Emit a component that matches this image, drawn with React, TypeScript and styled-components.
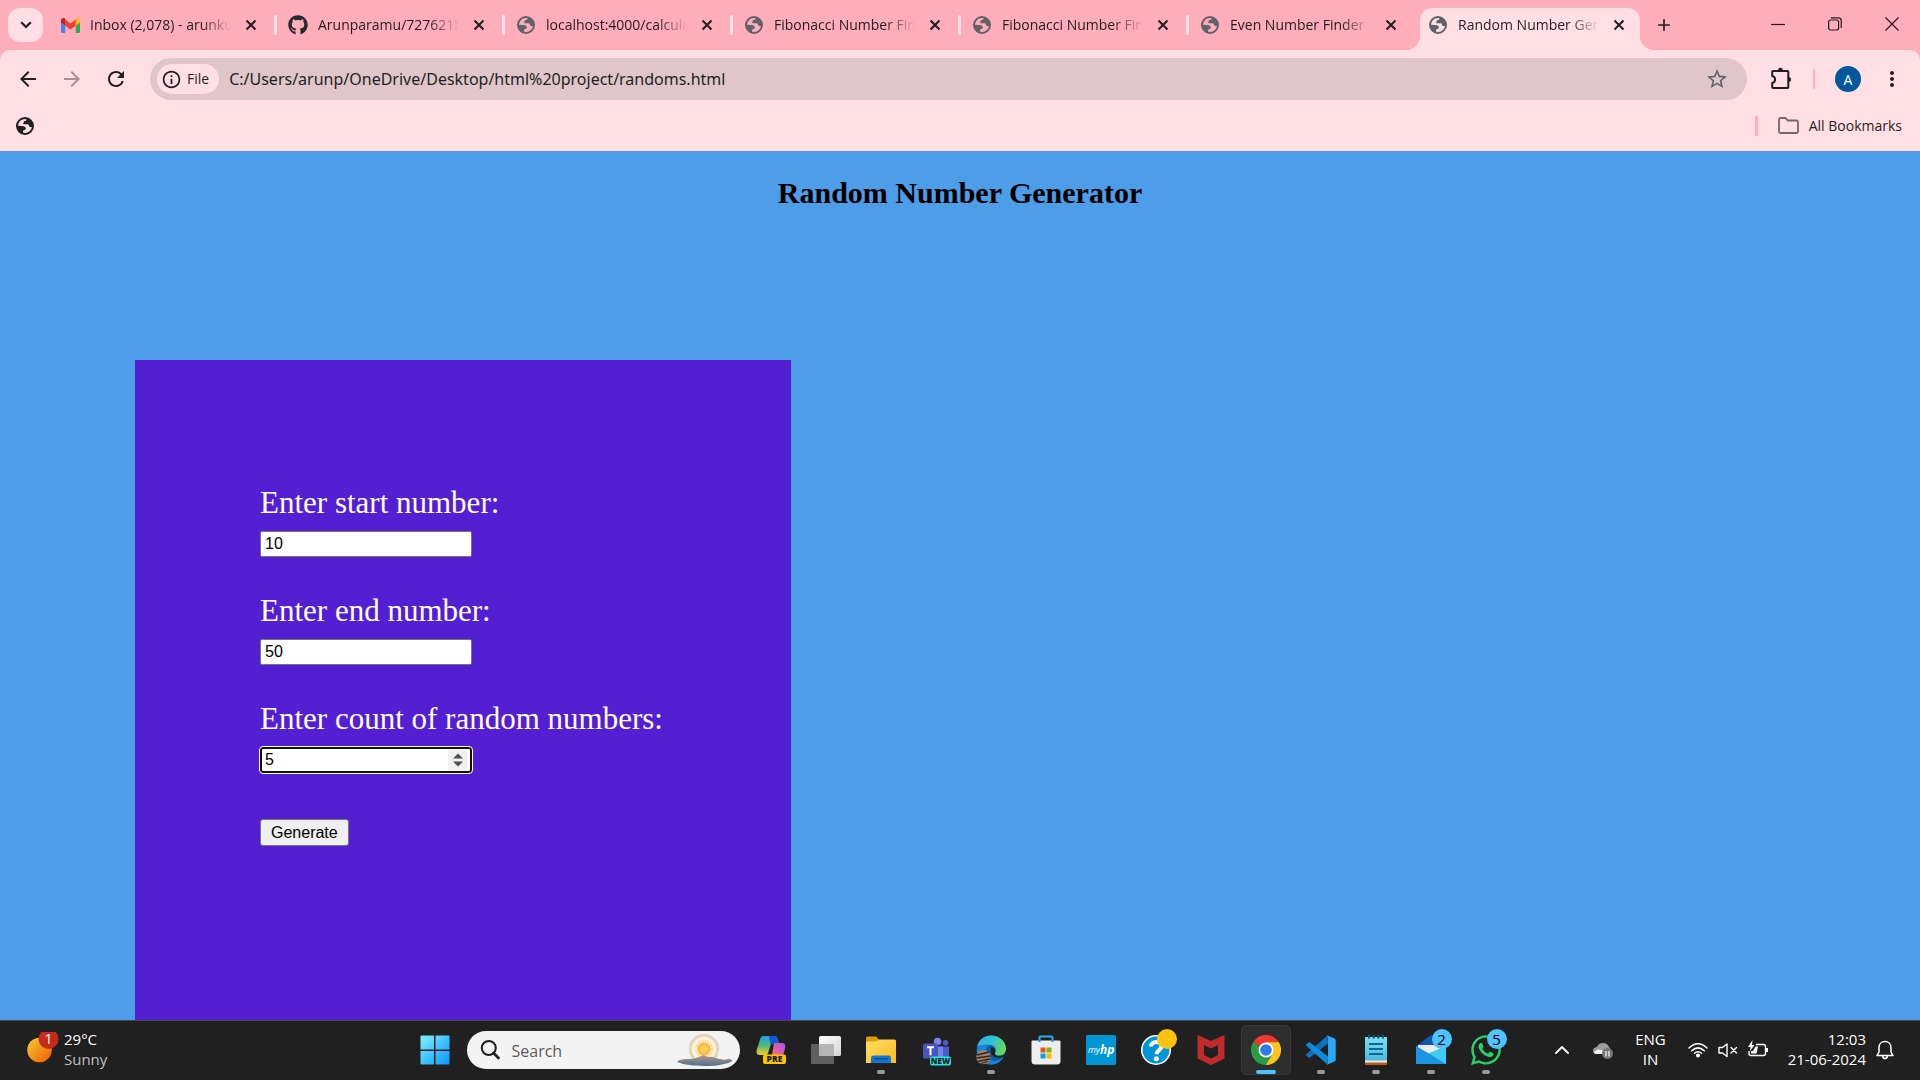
import React, { useState } from "react";
import styled, { createGlobalStyle, css } from "styled-components";
import { FaGithub, FaWhatsapp } from "react-icons/fa6";
import {
  MdArrowBack,
  MdArrowForward,
  MdRefresh,
  MdStarBorder,
  MdMoreVert,
  MdInfoOutline,
  MdAdd,
} from "react-icons/md";

const ui = '"Open Sans", "Noto Sans", sans-serif';
const strip = "#ffacbb";
const bar = "#ffdfe4";

const GlobalStyle = createGlobalStyle`
  * { box-sizing: border-box; }
  body { margin: 0; }
  button { font: inherit; color: inherit; }
  svg { flex: none; }
`;

const Screen = styled.div`
  display: flex;
  flex-direction: column;
  height: 100vh;
  overflow: hidden;
  font-family: ${ui};
  color: #1f1f1f;
`;

const PlainButton = styled.button`
  display: flex;
  align-items: center;
  justify-content: center;
  flex: none;
  padding: 0;
  border: 0;
  background: none;
`;

/* ---------- tab strip ---------- */

const TabStrip = styled.div`
  display: flex;
  align-items: stretch;
  height: 50px;
  padding-left: 8px;
  background: ${strip};
`;

const TabSearch = styled(PlainButton)`
  width: 35px;
  height: 34px;
  margin: 8px 5px 0 0;
  border-radius: 12px;
  background: ${bar};
`;

const TabCell = styled.div<{ $separator?: boolean }>`
  position: relative;
  display: flex;
  flex: 0 1 228px;
  min-width: 0;
  padding: 8px 4px 0;
  ${(p) =>
    p.$separator &&
    css`
      &::after {
        content: "";
        position: absolute;
        right: -1px;
        top: 15px;
        width: 3px;
        height: 20px;
        border-radius: 1px;
        background: ${bar};
      }
    `}
`;

const TabBody = styled.div<{ $active?: boolean }>`
  position: relative;
  display: flex;
  align-items: center;
  flex: 1;
  min-width: 0;
  height: 42px;
  padding: 0 11px 8px 9px;
  border-radius: 12px 12px 0 0;
  background: ${(p) => (p.$active ? bar : "transparent")};
  ${(p) =>
    p.$active &&
    css`
      &::before,
      &::after {
        content: "";
        position: absolute;
        bottom: 0;
        width: 14px;
        height: 14px;
      }
      &::before {
        left: -14px;
        background: radial-gradient(circle at 0 0, transparent 14px, ${bar} 14px);
      }
      &::after {
        right: -14px;
        background: radial-gradient(circle at 100% 0, transparent 14px, ${bar} 14px);
      }
    `}
`;

const Favicon = styled.span`
  display: flex;
  flex: none;
  justify-content: center;
  width: 18px;
  margin-right: 11px;
  color: #5f6368;
`;

const TabTitle = styled.span`
  flex: 1;
  min-width: 0;
  overflow: hidden;
  white-space: nowrap;
  font-size: 14px;
  line-height: 20px;
  mask-image: linear-gradient(to right, #000 calc(100% - 30px), transparent);
`;

const TabClose = styled(PlainButton)`
  width: 20px;
  height: 20px;
  margin-left: 10px;
`;

const NewTab = styled(PlainButton)`
  width: 36px;
  height: 34px;
  margin: 8px 0 0 2px;
  font-size: 20px;
`;

const WindowControls = styled.div`
  display: flex;
  margin-left: auto;
`;

const WindowButton = styled(PlainButton)`
  width: 57px;
  height: 48px;
`;

/* ---------- toolbar ---------- */

const Chrome = styled.div`
  background: ${strip};
`;

const ChromeInner = styled.div`
  background: ${bar};
  border-radius: 10px 10px 0 0;
  padding-top: 8px;
`;

const Toolbar = styled.div`
  display: flex;
  align-items: center;
  gap: 8px;
  padding: 0 10px;
`;

const ToolButton = styled(PlainButton)<{ $muted?: boolean }>`
  width: 36px;
  height: 36px;
  font-size: 24px;
  opacity: ${(p) => (p.$muted ? 0.4 : 1)};
`;

const AddressBar = styled.div`
  display: flex;
  align-items: center;
  flex: 1;
  min-width: 0;
  height: 42px;
  margin: 0 8px;
  padding: 0 18px 0 7px;
  border-radius: 21px;
  background: #e0c6ca;
`;

const FileChip = styled(PlainButton)`
  gap: 5px;
  height: 30px;
  padding: 0 10px 0 4px;
  border-radius: 15px;
  background: ${bar};
  font-size: 14px;
  line-height: 20px;
`;

const Url = styled.input`
  flex: 1;
  min-width: 0;
  margin-left: 10px;
  padding: 0;
  border: 0;
  outline: 0;
  background: none;
  color: #1f1f1f;
  font-family: "Noto Sans", sans-serif;
  font-size: 16px;
  line-height: 24px;
`;

const StarButton = styled(PlainButton)`
  color: #5f6368;
  font-size: 24px;
`;

const Divider = styled.span`
  flex: none;
  width: 2px;
  height: 20px;
  border-radius: 1px;
  background: ${strip};
`;

const Avatar = styled(PlainButton)`
  width: 26px;
  height: 26px;
  margin: 0 5px 0 8px;
  border-radius: 50%;
  background: #01579b;
  color: #fff;
  font-size: 14px;
`;

const ToolEnd = styled.div`
  display: flex;
  align-items: center;
  gap: 8px;
`;

const ExtDivider = styled(Divider)`
  margin: 0 4px 0 6px;
`;

const BookmarkBar = styled.div`
  display: flex;
  align-items: center;
  justify-content: space-between;
  height: 51px;
  padding: 0 18px 0 16px;
`;

const BookmarkItem = styled(PlainButton)`
  gap: 10px;
  font-size: 14px;
  line-height: 20px;
`;

const BookmarkEnd = styled.div`
  display: flex;
  align-items: center;
  gap: 20px;
`;

const BookmarkDivider = styled(Divider)`
  width: 3px;
`;

/* ---------- page ---------- */

const Page = styled.main`
  display: flex;
  flex-direction: column;
  align-items: flex-start;
  flex: 1;
  min-height: 0;
  overflow: hidden;
  background: #4e9de8;
  font-family: "Liberation Serif", serif;
`;

const Title = styled.h1`
  width: 100%;
  margin: 25px 0 150px;
  text-align: center;
  color: #000;
  font-size: 30px;
  line-height: 34px;
`;

const Panel = styled.form`
  display: flex;
  flex-direction: column;
  align-items: flex-start;
  flex: 1 0 auto;
  gap: 36px;
  margin-left: 135px;
  padding: 125px 128px 125px 125px;
  background: #541ed3;
`;

const Field = styled.div`
  display: flex;
  flex-direction: column;
  align-items: flex-start;
  gap: 10px;
`;

const Label = styled.label`
  color: #fff;
  font-size: 31px;
  line-height: 36px;
`;

const NumberInput = styled.input<{ $focused?: boolean }>`
  width: 212px;
  height: 26px;
  padding: 0 4px;
  border: 1px solid #767676;
  border-radius: 2px;
  background: #fff;
  color: #000;
  caret-color: transparent;
  font-family: "Liberation Sans", sans-serif;
  font-size: 16px;
  outline: 0;
  ${(p) =>
    p.$focused &&
    css`
      padding: 0 3px;
      border: 2px solid #101010;
      border-radius: 3px;
      outline: 1px solid #fff;
      &::-webkit-inner-spin-button {
        appearance: none;
        width: 19px;
        height: 20px;
        margin: 0;
        opacity: 1;
        background: #f0f0f0
          url("data:image/svg+xml,%3Csvg xmlns='http://www.w3.org/2000/svg' width='10' height='14' fill='%23505050'%3E%3Cpath d='M0 5.500L5 .5l5 5zM0 8.500h10l-5 5z'/%3E%3C/svg%3E")
          center no-repeat;
      }
    `}
`;

const Generate = styled.button`
  height: 27px;
  margin-top: 10px;
  padding: 0 10px;
  border: 1px solid #767676;
  border-radius: 3px;
  background: #efefef;
  color: #000;
  font-family: "Liberation Sans", sans-serif;
  font-size: 16px;
`;

/* ---------- taskbar ---------- */

const Taskbar = styled.footer`
  display: grid;
  grid-template-columns: 1fr auto 1fr;
  align-items: center;
  height: 60px;
  padding-bottom: 2px;
  border-top: 1px solid #484848;
  background: #202020;
  color: #fff;
  font-size: 15px;
  line-height: 20px;
`;

const Weather = styled(PlainButton)`
  justify-self: start;
  gap: 5px;
  margin-left: 25px;
  text-align: left;
`;

const WeatherText = styled.span`
  display: flex;
  flex-direction: column;
  padding-bottom: 2px;
  & small {
    color: #c0c0c0;
    font-size: 15px;
  }
`;

const Apps = styled.nav`
  display: flex;
  align-items: center;
  gap: 5px;
`;

const AppButton = styled(PlainButton)<{ $active?: boolean }>`
  position: relative;
  width: 50px;
  height: 50px;
  border-radius: 5px;
  border: 1px solid ${(p) => (p.$active ? "#383838" : "transparent")};
  background: ${(p) => (p.$active ? "#2d2d2d" : "none")};
`;

const Running = styled.span<{ $active?: boolean }>`
  position: absolute;
  bottom: 0;
  left: 50%;
  width: ${(p) => (p.$active ? 20 : 8)}px;
  height: 4px;
  border-radius: 2px;
  background: ${(p) => (p.$active ? "#4cc2ff" : "#9a9a9a")};
  transform: translateX(-50%);
`;

const Badge = styled.span`
  position: absolute;
  top: 3px;
  right: 3px;
  width: 20px;
  height: 20px;
  border-radius: 50%;
  background: #4cc2ff;
  color: #000;
  text-align: center;
`;

const SearchBox = styled.label`
  display: flex;
  align-items: center;
  width: 273px;
  height: 38px;
  margin: 0 1px 0 2px;
  padding: 0 7px 0 13px;
  border-radius: 19px;
  background: #f3f3f3;
`;

const SearchInput = styled.input`
  flex: 1;
  min-width: 0;
  margin-left: 12px;
  padding: 2px 0 0;
  border: 0;
  outline: 0;
  background: none;
  font-family: ${ui};
  font-size: 16px;
  &::placeholder {
    color: #5c5c5c;
    opacity: 1;
  }
`;

const Tray = styled.div`
  display: flex;
  align-items: center;
  justify-self: end;
  padding-right: 26px;
`;

const TrayIcons = styled(PlainButton)`
  gap: 10px;
  margin-right: 20px;
`;

const TrayText = styled(PlainButton)`
  flex-direction: column;
  align-items: center;
  margin-right: 22px;
  padding-bottom: 2px;
`;

const Clock = styled(TrayText)`
  align-items: flex-end;
  margin-right: 10px;
`;

const TrayChevron = styled(PlainButton)`
  margin-right: 24px;
`;

const TrayCloud = styled(PlainButton)`
  margin-right: 22px;
`;

/* ---------- drawings ---------- */

const Cross = () => (
  <svg width="12" height="12" viewBox="0 0 12 12" stroke="#1f1f1f" strokeWidth="2">
    <path d="M1.500 1.500l9 9M10.500 1.500l-9 9" />
  </svg>
);

const Chevron = () => (
  <svg width="12" height="8" viewBox="0 0 12 8" fill="none" stroke="#1f1f1f" strokeWidth="2.200">
    <path d="M1.200 1.200L6 6l4.800-4.800" />
  </svg>
);

const Globe = () => (
  <svg width="18" height="18" viewBox="0 0 18 18">
    <circle cx="9" cy="9" r="8" fill="none" stroke="currentColor" strokeWidth="2" />
    <path d="M10.500 1v1.500q0 1.500-1.600 1.500-1.300 0-1.300 1.400 0 1.300-1 1.600 3 .3 5 .3 1.300 0 1.300 1.300 0 1.400 1.300 1.400H17Q17.600 3 10.500 1z" fill="currentColor" />
    <path d="M1 8.700q2.500 0 5.200.2 3.600.3 3.600 2.600 0 1.500-1.500 1.500-1.300.1-1.300 1.500V17Q1 15.500 1 8.700z" fill="currentColor" />
  </svg>
);

const Gmail = () => (
  <svg width="19" height="15" viewBox="0 0 19 15">
    <path d="M0 3v10.700c0 .7.6 1.300 1.300 1.300h3V7.500L2 3z" fill="#4285f4" />
    <path d="M14.700 15h3c.7 0 1.300-.6 1.300-1.300V3l-2 .5-2.300 4z" fill="#34a853" />
    <path d="M14.700 2v5.700L19 4.500V2.500C19 .6 16.600-.6 15 .6z" fill="#fbbc04" />
    <path d="M4.300 7.700V1.600L9.500 5.500l5.200-3.900v6.100L9.500 11.600z" fill="#ea4335" />
    <path d="M0 2.500v2l4.300 3.200V1.600L4 .6C2.400-.6 0 .6 0 2.500z" fill="#c5221f" />
  </svg>
);

const Puzzle = () => (
  <svg width="24" height="26" viewBox="0 0 24 26" fill="none">
    <path d="M4 5h14.500q.8 0 .8.800v15.400q0 .8-.8.800H4q-.8 0-.8-.8V17c3.800-.6 3.800-6.400 0-7V5.800Q3.200 5 4 5z" stroke="#1f1f1f" strokeWidth="2" strokeLinejoin="round" />
    <path d="M9 4.500a2.400 2.700 0 0 1 4.800 0zM19.500 11a2.500 2.500 0 0 1 0 5z" fill="#1f1f1f" />
  </svg>
);

const Folder = () => (
  <svg width="21" height="17" viewBox="0 0 21 17" fill="none" stroke="#6a6a6e" strokeWidth="1.800">
    <path d="M1 2.500C1 1.700 1.700 1 2.500 1h5l2.200 2.500h8.800c.8 0 1.500.7 1.500 1.500v9.500c0 .8-.7 1.500-1.500 1.500h-16c-.8 0-1.500-.7-1.500-1.500z" />
  </svg>
);

const Sun = () => (
  <svg width="34" height="36" viewBox="0 0 34 36">
    <defs>
      <linearGradient id="sun" x1="0" y1="0" x2="1" y2="1">
        <stop offset="0" stopColor="#f5cf35" />
        <stop offset=".7" stopColor="#f47a12" />
        <stop offset="1" stopColor="#ee5f10" />
      </linearGradient>
    </defs>
    <circle cx="14.500" cy="18" r="12.300" fill="url(#sun)" />
    <circle cx="23.500" cy="7" r="10" fill="#c42b1c" />
    <text x="23.500" y="12" textAnchor="middle" fill="#fff" fontFamily="Open Sans" fontSize="14">1</text>
  </svg>
);

const Windows = () => (
  <svg width="30" height="30" viewBox="0 0 30 30">
    <defs>
      <linearGradient id="win" gradientUnits="userSpaceOnUse" x1="0" y1="0" x2="30" y2="30">
        <stop offset="0" stopColor="#7df3ff" />
        <stop offset="1" stopColor="#0a94ff" />
      </linearGradient>
    </defs>
    <path d="M1.500.5H14v14H.5v-13q0-1 1-1zM15.500.5h13q1 0 1 1v13h-14zM.5 16H14v13.500H1.500q-1 0-1-1zM15.500 16h14v12.500q0 1-1 1h-13z" fill="url(#win)" />
  </svg>
);

const Magnifier = () => (
  <svg width="20" height="20" viewBox="0 0 20 20" fill="none" stroke="#1f1f1f">
    <circle cx="8.800" cy="8" r="7" strokeWidth="2" />
    <path d="M13.500 13l5 5" strokeWidth="2.600" strokeLinecap="round" />
  </svg>
);

const Sunrise = () => (
  <svg width="56" height="34" viewBox="0 0 56 34">
    <defs>
      <linearGradient id="hill" x1="0" y1="0" x2="0" y2="1">
        <stop offset="0" stopColor="#b09a86" />
        <stop offset="1" stopColor="#4c6f93" />
      </linearGradient>
      <radialGradient id="core">
        <stop offset="0" stopColor="#ffe070" />
        <stop offset="1" stopColor="#fbb02e" />
      </radialGradient>
    </defs>
    <circle cx="27" cy="16" r="14.500" fill="#fdf3e4" stroke="#c3dfd9" strokeWidth="1.500" />
    <circle cx="27" cy="16" r="13.200" fill="none" stroke="#fac98e" strokeWidth="1.500" />
    <circle cx="27" cy="16" r="7.500" fill="none" stroke="#fbcb5b" strokeWidth="3" strokeDasharray="1 1.400" />
    <circle cx="27" cy="16" r="6.300" fill="url(#core)" />
    <path d="M0 29c2-3 8-3 12-3 5 0 8-1 12-3 3-2 5 1 8 1 4-1 7 2 11 2 4 1 5 1 8 0 3 0 5 1 4 2-2 2-8 3-12 4-10 1.500-24 1-30 0-6-.5-10-2-13-3z" fill="url(#hill)" />
  </svg>
);

const Copilot = () => (
  <svg width="32" height="32" viewBox="0 0 32 32">
    <defs>
      <linearGradient id="cpa" x1="0" y1="0" x2="0" y2="1">
        <stop offset="0" stopColor="#17a3ee" />
        <stop offset=".5" stopColor="#50b67b" />
        <stop offset="1" stopColor="#f2cf22" />
      </linearGradient>
      <linearGradient id="cpb" x1="1" y1="0" x2="0" y2="1">
        <stop offset="0" stopColor="#a05cf0" />
        <stop offset=".5" stopColor="#e45cae" />
        <stop offset="1" stopColor="#ff8a4c" />
      </linearGradient>
    </defs>
    <path d="M9 2h10c2.500 0 3 1 3.800 3.500L24 9h-5c-2 0-3 1-4 4l-2 6c-.6 2-1.500 2-4 2H5c-3 0-4-2-3.300-5L5 5.500C5.800 3 6.700 2 9 2z" fill="url(#cpa)" />
    <path d="M14 2h5c2.500 0 3 1 3.800 3.500L24 9h-5c-1.500 0-2.500.7-3.300 2.500z" fill="#1459d4" />
    <path d="M19 9h7c4 0 5 2 4 5.500L28.500 20c-.7 2.500-2 4-5 4H14c2 0 2.500-1 3-3z" fill="url(#cpb)" />
    <rect x="8" y="20.500" width="23" height="9.500" rx="2" fill="#fdc500" />
    <text x="19.500" y="28.200" textAnchor="middle" fontFamily="Open Sans" fontWeight="800" fontSize="8.500" fill="#1b1b1b">PRE</text>
  </svg>
);

const TaskView = () => (
  <svg width="30" height="28" viewBox="0 0 30 28">
    <defs>
      <linearGradient id="tv" x1="0" y1="0" x2="1" y2="1">
        <stop offset="0" stopColor="#fff" />
        <stop offset="1" stopColor="#d4d4d4" />
      </linearGradient>
    </defs>
    <rect x="8" y="0" width="22" height="20" rx="1.500" fill="url(#tv)" />
    <path d="M1 8h22v19q0 1-1 1H1q-1 0-1-1V9q0-1 1-1z" fill="#5f5f5f" />
    <path d="M8 8h15v12H8z" fill="#b6b6b6" />
  </svg>
);

const Explorer = () => (
  <svg width="30" height="28" viewBox="0 0 30 28">
    <defs>
      <linearGradient id="fx" x1="0" y1="0" x2="1" y2="1">
        <stop offset="0" stopColor="#ffe06a" />
        <stop offset="1" stopColor="#fdb91d" />
      </linearGradient>
    </defs>
    <path d="M0 2Q0 .5 1.500.5H10l3 3-3 5H0z" fill="#dc9c07" />
    <path d="M0 5.500h10l3-2h15.500q1.500 0 1.500 1.500v22H0z" fill="url(#fx)" />
    <path d="M5 27v-5q0-2.500 2.500-2.500h15Q25 19.500 25 22v5z" fill="#1277cf" />
    <path d="M9 22.800h12" stroke="#0a4c90" strokeWidth="1.500" strokeLinecap="round" />
  </svg>
);

const Teams = () => (
  <svg width="30" height="30" viewBox="0 0 30 30" overflow="visible">
    <circle cx="16.500" cy="6.500" r="3.800" fill="#7b83eb" />
    <circle cx="24.500" cy="7.800" r="2.800" fill="#5059c9" />
    <path d="M20 11.500h8v9q0 3-4 3.500H20z" fill="#5059c9" />
    <path d="M8 11.500h14V24H13z" fill="#7b83eb" />
    <rect x="2" y="8.500" width="15" height="15" rx="1.500" fill="#4b53bc" />
    <path d="M6 12.300h7M9.500 12.300v8" stroke="#fff" strokeWidth="2" />
    <rect x="9" y="21.500" width="21" height="9" rx="2" fill="#23e5e0" />
    <text x="19.500" y="28.900" textAnchor="middle" fontFamily="Open Sans" fontWeight="800" fontSize="8" fill="#10201f">NEW</text>
  </svg>
);

const Edge = () => (
  <svg width="30" height="30" viewBox="0 0 30 30">
    <defs>
      <linearGradient id="ea" x1="0" y1=".2" x2="1" y2=".5">
        <stop offset="0" stopColor="#35a8ec" />
        <stop offset=".5" stopColor="#2fc4d2" />
        <stop offset="1" stopColor="#65dc58" />
      </linearGradient>
    </defs>
    <circle cx="15" cy="15" r="14.500" fill="#0f5cae" />
    <path d="M1 12C3 4 8.500.5 15 .5 24 .5 30 7 30 13.500c0 4.500-3 7-7 7-3.500 0-5-1.500-4-3 2-3 .5-7-5-7.500C8 9 3 10.500 1 12z" fill="url(#ea)" />
    <path d="M1 13c3-3 8-4 12-2.500-3 2-4 5-3 9 1 5 6 7 11 6 3-.5 5-2 6.500-3.500C25 27 20 29.500 15 29.500 6 29.500 0 22 1 13z" fill="#1286d8" />
    <path d="M15.500 12c3 .5 4.500 3 3.500 5.500-.5 2 1 3.500 4 3.500 3.500 0 5-1 7-3-.2 2.500-.6 2.500-1.600 3.500-5 2.500-12.400 1-13.400-3.500-.5-2.500-.5-4 .5-6z" fill="#202020" />
    <circle cx="7.500" cy="22" r="7.300" fill="#9c8069" />
    <path d="M.8 20l12.500-3M.3 23l14.400-2M2 26.500l12-2.500M5 28.500l7-2" stroke="#33261f" strokeWidth="1.300" />
  </svg>
);

const Store = () => (
  <svg width="30" height="30" viewBox="0 0 30 30">
    <path d="M8.500 7V2.500q0-1 1-1h11q1 0 1 1V7" fill="none" stroke="#27b0ef" strokeWidth="2" />
    <path d="M.5 6.500q0-1 1-1h27q1 0 1 1V26q0 3.500-3.500 3.500H4Q.5 29.500.5 26z" fill="#eee" />
    <path d="M8.500 4.500v2.500M21.500 4.500v2.500" stroke="#178cd0" strokeWidth="2" />
    <path d="M9.500 12.500h5v5h-5z" fill="#f25022" />
    <path d="M15.500 12.500h5v5h-5z" fill="#7fba00" />
    <path d="M9.500 18.500h5v5h-5z" fill="#00a4ef" />
    <path d="M15.500 18.500h5v5h-5z" fill="#ffb900" />
  </svg>
);

const MyHp = () => (
  <svg width="30" height="30" viewBox="0 0 30 30">
    <rect width="30" height="30" rx="1.500" fill="#0096d6" />
    <text x="2" y="18" fontFamily="Open Sans" fontStyle="italic" fontSize="9" fill="#fff">my</text>
    <text x="14" y="18.500" fontFamily="Open Sans" fontStyle="italic" fontWeight="700" fontSize="12" fill="#fff">hp</text>
  </svg>
);

const HelpIcon = () => (
  <svg width="30" height="30" viewBox="0 0 30 30" overflow="visible">
    <circle cx="15" cy="15" r="14.200" fill="#0096d6" stroke="#fff" strokeWidth="1.600" />
    <path d="M10 11.500c0-6 10.500-6.200 10.500-.3 0 4-5 3.800-5 8" fill="none" stroke="#fff" strokeWidth="4" />
    <circle cx="15.300" cy="23.700" r="2.500" fill="#fff" />
    <circle cx="26" cy="4" r="10" fill="#ffc20e" />
  </svg>
);

const McAfee = () => (
  <svg width="28" height="30" viewBox="0 0 28 30">
    <path d="M.5 0L14 6 27.500 0v23.500L14 30 .5 23.500zM7 10v10l7 3.500 7-3.500V10l-7 3.500z" fill="#bf2b2b" fillRule="evenodd" />
  </svg>
);

const ChromeLogo = () => (
  <svg width="30" height="30" viewBox="0 0 30 30">
    <path d="M15 15L2 7.500A15 15 0 0 1 28 7.500z" fill="#ea3a2d" />
    <path d="M15 15V7.500h13A15 15 0 0 1 15 30z" fill="#fcc31e" />
    <path d="M15 15l6.500 3.800L15 30A15 15 0 0 1 2 7.500z" fill="#2a9c45" />
    <path d="M15 7.500h13l-6.500 11.300L15 15z" fill="#fcc31e" />
    <circle cx="15" cy="15" r="7.500" fill="#fff" />
    <circle cx="15" cy="15" r="5.800" fill="#2c7bea" />
  </svg>
);

const VsCode = () => (
  <svg width="30" height="30" viewBox="0 0 30 30">
    <path d="M21.500.5L22 8.500 4 22.500q-1 .5-1.800-.2L.5 20.700q-.8-.9 0-1.700z" fill="#0a72bd" />
    <path d="M.5 9.300l1.700-1.600q.8-.7 1.800-.2L22 21.500l-.5 8L.5 11q-.8-.8 0-1.700z" fill="#0f8bd8" />
    <path d="M21.500.5l7.200 3q1 .5 1 1.500v20q0 1-1 1.500l-7.200 3q-1 0-1-.5 1.500 0 1.500-1.500v-25q0-1.500-1.500-1.500 0-.5 1-.5z" fill="#2aa7f3" />
  </svg>
);

const Notepad = () => (
  <svg width="22" height="30" viewBox="0 0 22 30">
    <defs>
      <linearGradient id="np" x1="0" y1="0" x2="0" y2="1">
        <stop offset="0" stopColor="#80e0f2" />
        <stop offset="1" stopColor="#4bb8dc" />
      </linearGradient>
    </defs>
    <path d="M0 24h22v6H0z" fill="#b75c14" />
    <path d="M0 24h22v3.500H0z" fill="#f4e9df" />
    <path d="M0 2h22v23.500H0z" fill="url(#np)" />
    <path d="M4 0v3.500M8.700 0v3.500M13.300 0v3.500M18 0v3.500" stroke="#0f5d7e" strokeWidth="2.200" />
    <path d="M4 9h14M4 14h14M4 19h14" stroke="#0d6a96" strokeWidth="1.800" />
  </svg>
);

const Mail = () => (
  <svg width="30" height="30" viewBox="0 0 30 30">
    <path d="M0 11L15 0l15 11v10H0z" fill="#0d56ae" />
    <path d="M2 10h26v6L15 22 2 16z" fill="#ececf0" />
    <path d="M0 11l13 7.500L30 11v18H0z" fill="#1c94e4" />
    <path d="M30 11v18L13 18.500z" fill="#3fcdf5" />
  </svg>
);

const OneDrive = () => (
  <svg width="20" height="20" viewBox="0 0 20 20">
    <path d="M3 14Q0 13.500 0 10.500T4 7q1.500-4 6-4 4.500 0 6 4l2 3-6 4z" fill="#9d9d9d" />
    <path d="M1 13q2-5 7-3l6 2-2 2H4q-2 0-3-1z" fill="#eee" />
    <circle cx="14.500" cy="13.500" r="5.500" fill="#747474" />
    <path d="M13 11v5.500M16 11v5.500" stroke="#fff" strokeWidth="1.200" />
  </svg>
);

const Wifi = () => (
  <svg width="20" height="20" viewBox="0 0 20 20" fill="none" stroke="#fff" strokeWidth="1.500" strokeLinecap="round">
    <path d="M1 8q9-8.500 18 0M3.700 10.800q6.300-5.800 12.600 0M6.500 13.300q3.500-3 7 0" />
    <circle cx="10" cy="15.500" r="1.300" fill="#fff" />
  </svg>
);

const Muted = () => (
  <svg width="20" height="20" viewBox="0 0 20 20" fill="none" stroke="#fff" strokeWidth="1.400" strokeLinejoin="round" strokeLinecap="round">
    <path d="M1 7.500h3.500L9 4v12.500L4.500 13H1zM13 7.500l5.500 5.500M18.500 7.500L13 13" />
  </svg>
);

const Battery = () => (
  <svg width="20" height="20" viewBox="0 0 20 20">
    <path d="M8 4.500h7.500q2 0 2 2v7q0 2-2 2H3q-2 0-2-2V11" fill="none" stroke="#fff" strokeWidth="1.400" />
    <path d="M7.500 6.500H10l-1.500 7H3V11h2zM18 8h2v4h-2z" fill="#fff" />
    <path d="M4.500 0L0 7h2.500L2 11l4.500-6H4z" fill="#fff" />
  </svg>
);

const Bell = () => (
  <svg width="18" height="20" viewBox="0 0 18 20" fill="none" stroke="#fff" strokeWidth="1.500" strokeLinejoin="round">
    <path d="M9 1.500c-3.500 0-6 2.500-6 6V12l-2 3.500h16L15 12V7.500c0-3.500-2.500-6-6-6zM6.500 16q.5 2.500 2.500 2.500t2.500-2.500" />
  </svg>
);

/* ---------- data ---------- */

const tabs = [
  { title: "Inbox (2,078) - arunku", icon: <Gmail /> },
  { title: "Arunparamu/727621b", icon: <FaGithub size={20} color="#24292f" /> },
  { title: "localhost:4000/calcula", icon: <Globe /> },
  { title: "Fibonacci Number Fin", icon: <Globe /> },
  { title: "Fibonacci Number Fin", icon: <Globe /> },
  { title: "Even Number Finder", icon: <Globe /> },
  { title: "Random Number Gen", icon: <Globe />, active: true },
];

type App = { name: string; icon: React.ReactNode; running?: boolean; active?: boolean; badge?: number };

const apps: App[] = [
  { name: "Copilot", icon: <Copilot /> },
  { name: "Task view", icon: <TaskView /> },
  { name: "File Explorer", icon: <Explorer />, running: true },
  { name: "Teams", icon: <Teams /> },
  { name: "Edge", icon: <Edge />, running: true },
  { name: "Microsoft Store", icon: <Store /> },
  { name: "myHP", icon: <MyHp /> },
  { name: "HP Support", icon: <HelpIcon /> },
  { name: "McAfee", icon: <McAfee /> },
  { name: "Chrome", icon: <ChromeLogo />, running: true, active: true },
  { name: "VS Code", icon: <VsCode />, running: true },
  { name: "Notepad", icon: <Notepad />, running: true },
  { name: "Mail", icon: <Mail />, running: true, badge: 2 },
  { name: "WhatsApp", icon: <FaWhatsapp size={34} color="#25d366" />, running: true, badge: 5 },
];

const fields = [
  { id: "start", label: "Enter start number:", value: "10" },
  { id: "end", label: "Enter end number:", value: "50" },
  { id: "count", label: "Enter count of random numbers:", value: "5", focused: true },
];

export default function App() {
  const [values, setValues] = useState<Record<string, string>>(
    Object.fromEntries(fields.map((f) => [f.id, f.value]))
  );

  return (
    <Screen>
      <GlobalStyle />
      <TabStrip>
        <TabSearch aria-label="Search tabs">
          <Chevron />
        </TabSearch>
        {tabs.map((tab, i) => (
          <TabCell key={i} $separator={!tab.active && !tabs[i + 1]?.active}>
            <TabBody $active={tab.active}>
              <Favicon>{tab.icon}</Favicon>
              <TabTitle>{tab.title}</TabTitle>
              <TabClose aria-label="Close tab">
                <Cross />
              </TabClose>
            </TabBody>
          </TabCell>
        ))}
        <NewTab aria-label="New tab">
          <MdAdd />
        </NewTab>
        <WindowControls>
          <WindowButton aria-label="Minimize">
            <svg width="14" height="14" stroke="#1f1f1f" strokeWidth="1.200">
              <path d="M0 7.500h14" />
            </svg>
          </WindowButton>
          <WindowButton aria-label="Restore">
            <svg width="14" height="14" stroke="#1f1f1f" strokeWidth="1.200" fill="none">
              <rect x=".6" y="3" width="10" height="10" rx="2" />
              <path d="M3 .8h7.500q2.700 0 2.700 2.700V11" />
            </svg>
          </WindowButton>
          <WindowButton aria-label="Close">
            <svg width="14" height="14" stroke="#1f1f1f" strokeWidth="1.200">
              <path d="M.5.5l13 13M13.500.5l-13 13" />
            </svg>
          </WindowButton>
        </WindowControls>
      </TabStrip>

      <Chrome>
        <ChromeInner>
          <Toolbar>
            <ToolButton aria-label="Back">
              <MdArrowBack />
            </ToolButton>
            <ToolButton aria-label="Forward" $muted>
              <MdArrowForward />
            </ToolButton>
            <ToolButton aria-label="Reload">
              <MdRefresh />
            </ToolButton>
            <AddressBar>
              <FileChip>
                <MdInfoOutline size={21} />
                File
              </FileChip>
              <Url aria-label="Address" defaultValue="C:/Users/arunp/OneDrive/Desktop/html%20project/randoms.html" />
              <StarButton aria-label="Bookmark this page">
                <MdStarBorder />
              </StarButton>
            </AddressBar>
            <ToolEnd>
              <ToolButton aria-label="Extensions">
                <Puzzle />
              </ToolButton>
              <ExtDivider />
              <Avatar aria-label="Profile">A</Avatar>
              <ToolButton aria-label="Menu">
                <MdMoreVert />
              </ToolButton>
            </ToolEnd>
          </Toolbar>
          <BookmarkBar>
            <BookmarkItem aria-label="Bookmark">
              <Globe />
            </BookmarkItem>
            <BookmarkEnd>
              <BookmarkDivider />
              <BookmarkItem>
                <Folder />
                All Bookmarks
              </BookmarkItem>
            </BookmarkEnd>
          </BookmarkBar>
        </ChromeInner>
      </Chrome>

      <Page>
        <Title>Random Number Generator</Title>
        <Panel onSubmit={(e) => e.preventDefault()}>
          {fields.map((f) => (
            <Field key={f.id}>
              <Label htmlFor={f.id}>{f.label}</Label>
              <NumberInput
                id={f.id}
                type="number"
                $focused={f.focused}
                autoFocus={f.focused}
                value={values[f.id]}
                onChange={(e) => setValues({ ...values, [f.id]: e.target.value })}
              />
            </Field>
          ))}
          <Generate>Generate</Generate>
        </Panel>
      </Page>

      <Taskbar>
        <Weather>
          <Sun />
          <WeatherText>
            29°C
            <small>Sunny</small>
          </WeatherText>
        </Weather>
        <Apps>
          <AppButton aria-label="Start">
            <Windows />
          </AppButton>
          <SearchBox>
            <Magnifier />
            <SearchInput type="text" placeholder="Search" aria-label="Search" />
            <Sunrise />
          </SearchBox>
          {apps.map((app) => (
            <AppButton key={app.name} aria-label={app.name} $active={app.active}>
              {app.icon}
              {app.badge && <Badge>{app.badge}</Badge>}
              {app.running && <Running $active={app.active} />}
            </AppButton>
          ))}
        </Apps>
        <Tray>
          <TrayChevron aria-label="Show hidden icons">
            <svg width="14" height="8" fill="none" stroke="#fff" strokeWidth="1.800" strokeLinecap="round">
              <path d="M1 7l6-6 6 6" />
            </svg>
          </TrayChevron>
          <TrayCloud aria-label="OneDrive">
            <OneDrive />
          </TrayCloud>
          <TrayText>
            <span>ENG</span>
            <span>IN</span>
          </TrayText>
          <TrayIcons aria-label="Network, sound, battery">
            <Wifi />
            <Muted />
            <Battery />
          </TrayIcons>
          <Clock>
            <span>12:03</span>
            <span>21-06-2024</span>
          </Clock>
          <PlainButton aria-label="Notifications">
            <Bell />
          </PlainButton>
        </Tray>
      </Taskbar>
    </Screen>
  );
}
